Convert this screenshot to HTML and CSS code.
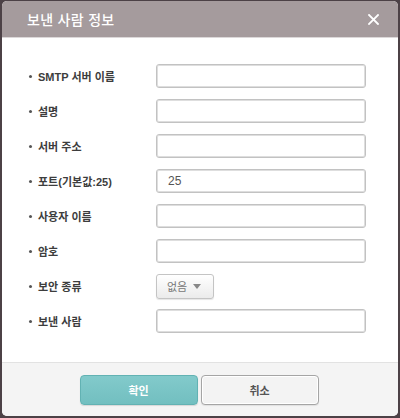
FILE: index.html
```html
<!DOCTYPE html>
<html lang="ko">
<head>
<meta charset="utf-8">
<link rel="stylesheet" href="styles.css">
</head>
<body>
<div class="dialog">
  <div class="header">
    <span class="title">보낸 사람 정보</span>
    <svg class="close" width="11" height="11" viewBox="0 0 11 11"><path d="M1 1 L10 10 M10 1 L1 10" stroke="#fff" stroke-width="1.8" stroke-linecap="square"/></svg>
  </div>
  <div class="body">
    <div class="row"><span class="label">SMTP 서버 이름</span><input class="field" type="text"></div>
    <div class="row"><span class="label">설명</span><input class="field" type="text"></div>
    <div class="row"><span class="label">서버 주소</span><input class="field" type="text"></div>
    <div class="row"><span class="label">포트(기본값:25)</span><input class="field" type="text" value="25"></div>
    <div class="row"><span class="label">사용자 이름</span><input class="field" type="text"></div>
    <div class="row"><span class="label">암호</span><input class="field" type="password"></div>
    <div class="row"><span class="label">보안 종류</span><div class="select">없음<span class="arrow"></span></div></div>
    <div class="row"><span class="label">보낸 사람</span><input class="field" type="text"></div>
  </div>
  <div class="footer">
    <button class="btn ok">확인</button>
    <button class="btn cancel">취소</button>
  </div>
</div>
</body>
</html>
```

FILE: styles.css
```css
* { box-sizing: border-box; }
html, body { margin: 0; padding: 0; }
body {
  background: #4c4146;
  width: 400px;
  height: 418px;
  padding: 1px 2px 2px 2px;
  font-family: "Liberation Sans", "Noto Sans CJK KR", sans-serif;
}
.dialog {
  height: 415px;
  background: #fff;
  border-radius: 5px;
  overflow: hidden;
  display: flex;
  flex-direction: column;
}
.header {
  height: 37px;
  flex: none;
  background: #a59b9d;
  border-bottom: 1px solid #dcd8d9;
  display: flex;
  align-items: center;
  justify-content: space-between;
  padding: 0 19px 0 25px;
}
.title {
  color: #fff;
  font-family: "Noto Sans CJK KR", sans-serif;
  font-size: 14px;
  font-weight: 500;
  letter-spacing: 0.3px;
}
.close { display: block; margin-top: 1px; }
.body {
  flex: 1;
  padding: 26px 0 0 26px;
  display: flex;
  flex-direction: column;
  gap: 11px;
}
.row {
  display: flex;
  align-items: center;
  height: 24px;
}
.label {
  width: 128px;
  flex: none;
  font-size: 11px;
  font-weight: bold;
  color: #3d3d3d;
  padding-left: 10px;
  position: relative;
}
.label::before {
  content: "";
  position: absolute;
  left: 1px;
  top: 50%;
  width: 3px;
  height: 3px;
  margin-top: -1px;
  background: #555;
  border-radius: 50%;
}
.field {
  width: 210px;
  height: 24px;
  border: 1px solid #c2c2c2;
  border-radius: 3px;
  box-shadow: inset 0 0 0 1px #dedede;
  padding: 0 11px;
  font-family: "Liberation Sans", "Noto Sans CJK KR", sans-serif;
  font-size: 12px;
  color: #555;
  outline: none;
  background: #fff;
}
.select {
  width: 58px;
  height: 25px;
  border: 1px solid #c4c4c4;
  border-radius: 3px;
  background: linear-gradient(#ffffff, #ebebeb);
  box-shadow: 0 1px 1px rgba(0,0,0,0.1);
  display: flex;
  align-items: center;
  padding-left: 10px;
  gap: 6px;
  font-family: "Noto Sans CJK KR", sans-serif;
  font-size: 11px;
  color: #777;
}
.arrow {
  width: 0;
  height: 0;
  border-left: 4px solid transparent;
  border-right: 4px solid transparent;
  border-top: 5px solid #888;
}
.footer {
  height: 54px;
  flex: none;
  background: #f4f4f4;
  border-top: 1px solid #e2e2e2;
  display: flex;
  justify-content: center;
  gap: 3px;
  padding-top: 12px;
  padding-right: 2px;
}
.btn {
  width: 118px;
  height: 30px;
  border-radius: 4px;
  font-family: "Noto Sans CJK KR", sans-serif;
  font-size: 11px;
  font-weight: bold;
  cursor: pointer;
}
.ok {
  background: linear-gradient(#82cacb, #72bfc0);
  border: 1px solid #62b2b3;
  color: #fff;
  box-shadow: 0 1px 1px rgba(0,0,0,0.12);
}
.cancel {
  background: #f3f3f3;
  border: 1px solid #a5a5a5;
  box-shadow: inset 0 0 0 1px #ffffff, 0 1px 1px rgba(0,0,0,0.08);
  color: #555;
}
```
